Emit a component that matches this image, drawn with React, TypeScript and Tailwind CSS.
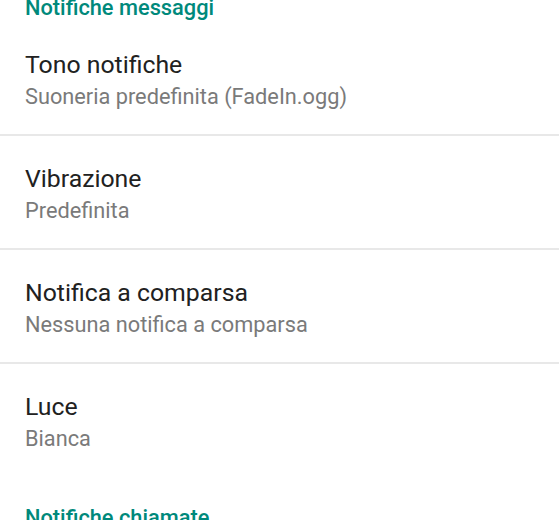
const rows = [
  { title: 'Tono notifiche', subtitle: 'Suoneria predefinita (FadeIn.ogg)' },
  { title: 'Vibrazione', subtitle: 'Predefinita' },
  { title: 'Notifica a comparsa', subtitle: 'Nessuna notifica a comparsa' },
  { title: 'Luce', subtitle: 'Bianca' },
];

function SectionHeader({ label }: { label: string }) {
  return (
    <h2 className="px-[25px] text-[21.8px] leading-[28px] font-medium text-[#00897b]">{label}</h2>
  );
}

export default function App() {
  return (
    <div className="h-[520px] w-full overflow-hidden bg-white font-['Roboto',sans-serif]">
      {/* list is scrolled a little: top header is cut off */}
      <div className="-mt-[6px]">
        <SectionHeader label="Notifiche messaggi" />
        <div>
          {rows.map((r, i) => (
            <div key={r.title}>
              <div className="px-[25px] pt-[27px] pb-[23px]">
                <p className="text-[24.8px] leading-[32px] text-[#212121]">{r.title}</p>
                <p className="mt-[2px] text-[21.75px] leading-[28px] text-[#7a7a7a]">{r.subtitle}</p>
              </div>
              {i < rows.length - 1 && <div className="h-[2px] bg-[#e8e8e8]" />}
            </div>
          ))}
        </div>
        <div className="mt-[28px]">
          <SectionHeader label="Notifiche chiamate" />
        </div>
      </div>
    </div>
  );
}
